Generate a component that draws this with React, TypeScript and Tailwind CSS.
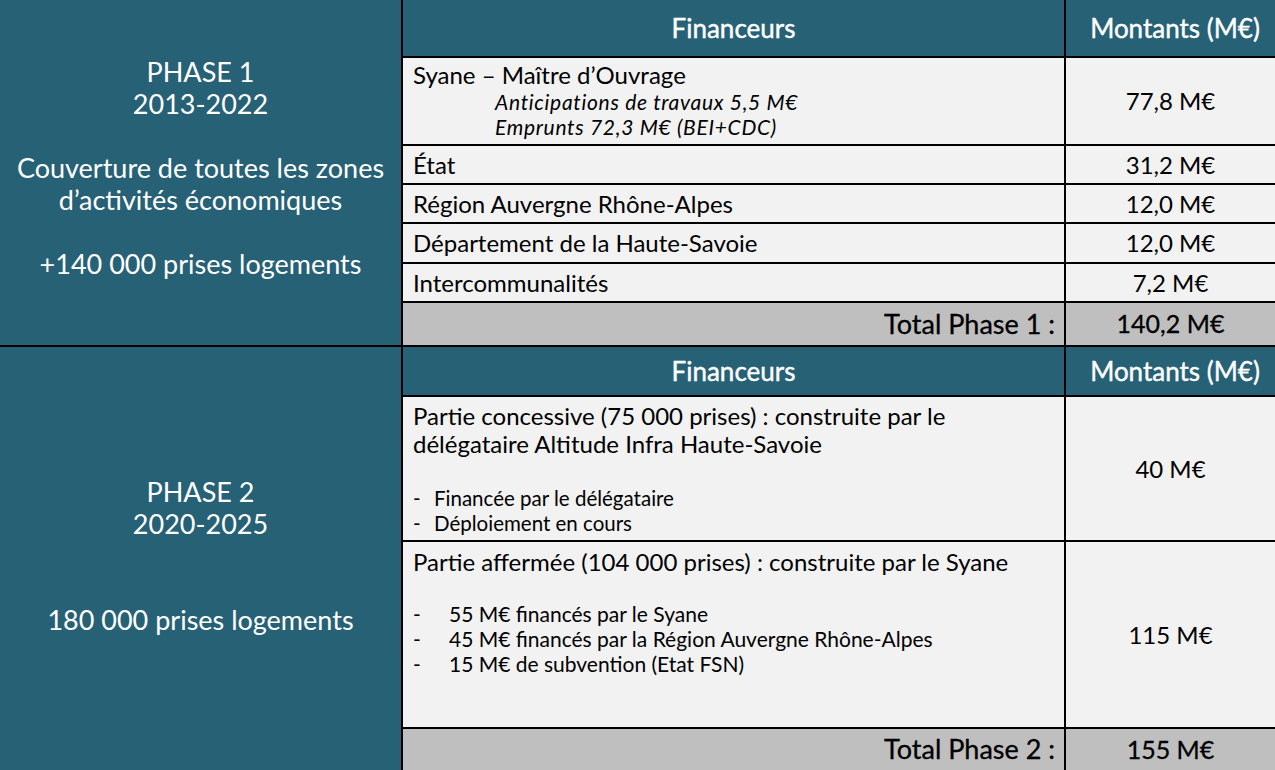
const font = { fontFamily: "Lato, 'Open Sans', sans-serif" };

type Row = {
  h: string;
  left: React.ReactNode;
  right: React.ReactNode;
};

function HeaderRow({ h }: { h: string }) {
  return (
    <div className={`flex ${h} border-b-2 border-black bg-[#276176] text-white text-[26px] [-webkit-text-stroke:0.4px_white]`}>
      <div className="w-[663px] border-r-2 border-black flex items-center justify-center">Financeurs</div>
      <div className="flex-1 flex items-center justify-center pl-[9px]">Montants (M€)</div>
    </div>
  );
}

function BodyRow({ h, left, right }: Row) {
  return (
    <div className={`flex ${h} border-b-2 border-black bg-[#f2f2f2] text-black`}>
      <div className="w-[663px] border-r-2 border-black flex flex-col justify-center pl-[10px] text-[24px] leading-[28px]">
        {left}
      </div>
      <div className="flex-1 flex items-center justify-center text-[24px]">{right}</div>
    </div>
  );
}

function TotalRow({ label, value, h }: { label: string; value: string; h: string }) {
  return (
    <div className={`flex ${h} bg-[#bfbfbf] text-black [-webkit-text-stroke:0.3px_black]`}>
      <div className="w-[663px] border-r-2 border-black flex items-center justify-end pr-[9px] text-[27px]">{label}</div>
      <div className="flex-1 flex items-center justify-center text-[25px]">{value}</div>
    </div>
  );
}

function PhaseLabel({ lines, pad }: { lines: string[]; pad: string }) {
  return (
    <div className={`w-[403px] shrink-0 border-r-2 border-black flex flex-col items-center justify-center text-white text-[27px] leading-[32px] text-center ${pad}`}>
      {lines.map((l, i) => (
        <div key={i} className="h-[32px] whitespace-nowrap">{l}</div>
      ))}
    </div>
  );
}

export default function App() {
  return (
    <div className="w-[1275px] h-[770px] bg-[#276176] overflow-hidden" style={font}>
      {/* Phase 1 */}
      <div className="flex h-[347px] border-b-2 border-black">
        <PhaseLabel
          pad="pb-[9px]"
          lines={[
            "PHASE 1",
            "2013-2022",
            "",
            "Couverture de toutes les zones",
            "d’activités économiques",
            "",
            "+140 000 prises logements",
          ]}
        />
        <div className="flex-1 flex flex-col">
          <HeaderRow h="h-[58px]" />
          <BodyRow
            h="h-[88px]"
            left={
              <div className="flex flex-col pb-[3px]">
                <div>Syane – Maître d’Ouvrage</div>
                <div className="pl-[82px] italic text-[21px] leading-[25px] tracking-[0.7px]">
                  <div>Anticipations de travaux 5,5 M€</div>
                  <div>Emprunts 72,3 M€ (BEI+CDC)</div>
                </div>
              </div>
            }
            right="77,8 M€"
          />
          <BodyRow h="h-[39px]" left="État" right="31,2 M€" />
          <BodyRow h="h-[39px]" left="Région Auvergne Rhône-Alpes" right="12,0 M€" />
          <BodyRow h="h-[40px]" left="Département de la Haute-Savoie" right="12,0 M€" />
          <BodyRow h="h-[39px]" left="Intercommunalités" right="7,2 M€" />
          <TotalRow h="h-[42px]" label="Total Phase 1 :" value="140,2 M€" />
        </div>
      </div>

      {/* Phase 2 */}
      <div className="flex h-[423px]">
        <PhaseLabel
          pad="pb-[5px]"
          lines={["PHASE 2", "2020-2025", "", "", "180 000 prises logements"]}
        />
        <div className="flex-1 flex flex-col">
          <HeaderRow h="h-[50px]" />
          <BodyRow
            h="h-[145px]"
            left={
              <div className="flex flex-col">
                <div>Partie concessive (75 000 prises) : construite par le</div>
                <div>délégataire Altitude Infra Haute-Savoie</div>
                <div className="mt-[28px] text-[20.5px] leading-[25px]">
                  <div className="flex"><span className="w-[21px]">-</span>Financée par le délégataire</div>
                  <div className="flex"><span className="w-[21px]">-</span>Déploiement en cours</div>
                </div>
              </div>
            }
            right="40 M€"
          />
          <BodyRow
            h="h-[187px]"
            left={
              <div className="flex flex-col self-stretch pt-[6px] h-full">
                <div>Partie affermée (104 000 prises) : construite par le Syane</div>
                <div className="mt-[25px] text-[21px] leading-[25px]">
                  <div className="flex"><span className="w-[36px]">-</span>55 M€ financés par le Syane</div>
                  <div className="flex"><span className="w-[36px]">-</span>45 M€ financés par la Région Auvergne Rhône-Alpes</div>
                  <div className="flex"><span className="w-[36px]">-</span>15 M€ de subvention (Etat FSN)</div>
                </div>
              </div>
            }
            right="115 M€"
          />
          <TotalRow h="h-[41px]" label="Total Phase 2 :" value="155 M€" />
        </div>
      </div>
    </div>
  );
}
